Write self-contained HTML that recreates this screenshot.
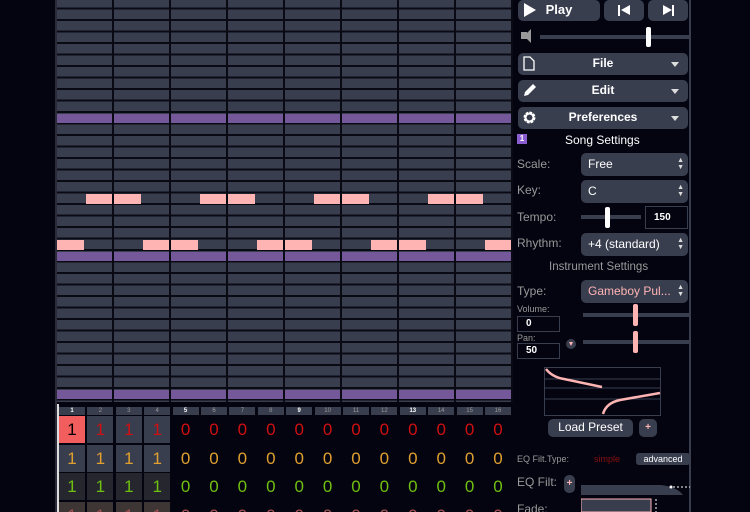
<!DOCTYPE html>
<html style="width:750px;height:512px;overflow:hidden"><head><meta charset="utf-8"><style>
*{margin:0;padding:0;box-sizing:border-box}
body{width:750px;height:512px;overflow:hidden;background:#040410;font-family:"Liberation Sans","DejaVu Sans",sans-serif;position:relative;color:#fff}
.a{position:absolute}
.btn{position:absolute;background:#393e4f;border-radius:5px;color:#fff;font-size:12px;font-weight:bold;text-align:center}
.lbl{position:absolute;color:#999;font-size:12px}
.sel{position:absolute;background:#393e4f;border-radius:5px;color:#fff;font-size:12px;padding-left:7px}
.arr{position:absolute;right:4px;font-size:7px;color:#ddd;line-height:7px}
.dd{position:absolute;right:9px;top:9px;width:0;height:0;border-left:4px solid transparent;border-right:4px solid transparent;border-top:5px solid #ddd}
.n{position:absolute;background:#ffb4b4;height:10px;width:27px}
.pn{position:absolute;top:407px;height:8px;width:26px;background:#393e4f;color:#999;font-size:6px;text-align:center;line-height:8px}
.pc{position:absolute;width:26px;height:27px;font-size:17px;text-align:center;line-height:27px}
.inp{position:absolute;background:#040410;border:1px solid #393e4f;color:#fff;font-size:10px;font-weight:bold;padding-left:8px}
</style></head><body>
<div class="a" style="left:55px;top:0;width:2px;height:512px;background:#2a2a3a"></div>
<div class="a" style="left:57px;top:-2px;width:456px;height:404px;background:repeating-linear-gradient(to bottom,#393e4f 0 9.5px,#0a0a14 9.5px 11.5px)"></div>
<div class="a" style="left:57px;top:113.5px;width:456px;height:9.5px;background:#74589a"></div>
<div class="a" style="left:57px;top:251.5px;width:456px;height:9.5px;background:#74589a"></div>
<div class="a" style="left:57px;top:389.5px;width:456px;height:9.5px;background:#74589a"></div>
<div class="n" style="left:86px;top:194px"></div><div class="n" style="left:114px;top:194px"></div>
<div class="n" style="left:200px;top:194px"></div><div class="n" style="left:228px;top:194px"></div>
<div class="n" style="left:314px;top:194px"></div><div class="n" style="left:342px;top:194px"></div>
<div class="n" style="left:428px;top:194px"></div><div class="n" style="left:456px;top:194px"></div>
<div class="n" style="left:57px;top:240px"></div><div class="n" style="left:143px;top:240px"></div>
<div class="n" style="left:171px;top:240px"></div><div class="n" style="left:257px;top:240px"></div>
<div class="n" style="left:285px;top:240px"></div><div class="n" style="left:371px;top:240px"></div>
<div class="n" style="left:399px;top:240px"></div><div class="n" style="left:485px;top:240px"></div>
<div class="a" style="left:57px;top:0;width:456px;height:402px;background:repeating-linear-gradient(to right,transparent 0 55px,#0a0a14 55px 57px)"></div>
<div class="a" style="left:57px;top:404px;width:2px;height:108px;background:#ddd"></div>
<div class="a" style="left:0;top:0;width:750px;height:512px;overflow:hidden"><div id="pat"></div></div>
<script>
var h='';var cols=[['#d01010','#f25d5d','#393e4f'],['#e0a030','#393e4f','#393e4f'],['#6fc010','#25262e','#25262e'],['#a05050','#3e3535','#3e3535']];
for(var i=0;i<16;i++){var x=59+i*28.4;
h+='<div class="pn" style="left:'+x+'px;'+((i%4==0)?'color:#fff;font-weight:bold':'')+'">'+(i+1)+'</div>';
for(var r=0;r<4;r++){var y=416+r*28.5;var c=cols[r];var on=i<4;
var bg=on?(r==0&&i==0?c[1]:c[2]):'transparent';var col=(r==0&&i==0)?'#000':c[0];
h+='<div class="pc" style="left:'+x+'px;top:'+y+'px;background:'+bg+';color:'+col+'">'+(on?'1':'0')+'</div>';}}
document.getElementById('pat').innerHTML=h;
</script>
<div class="a" style="left:689px;top:0;width:2px;height:512px;background:#393e4f"></div>
<div class="btn" style="left:518px;top:0;width:82px;height:21px;line-height:20px;font-size:13px"><span style="position:absolute;left:6px;top:3px;width:0;height:0;border-top:7px solid transparent;border-bottom:7px solid transparent;border-left:12px solid #fff"></span>Play</div>
<div class="btn" style="left:604px;top:0;width:40px;height:21px"><span class="a" style="left:14px;top:5px;width:2px;height:11px;background:#fff"></span><span class="a" style="left:17px;top:5px;border-top:5.5px solid transparent;border-bottom:5.5px solid transparent;border-right:9px solid #fff"></span></div>
<div class="btn" style="left:648px;top:0;width:40px;height:21px"><span class="a" style="left:15px;top:5px;border-top:5.5px solid transparent;border-bottom:5.5px solid transparent;border-left:9px solid #fff"></span><span class="a" style="left:24px;top:5px;width:2px;height:11px;background:#fff"></span></div>
<div class="a" style="left:521px;top:32px;width:6px;height:7px;background:#999"></div><div class="a" style="left:524px;top:29px;border-top:7px solid transparent;border-bottom:7px solid transparent;border-right:7px solid #999"></div>
<div class="a" style="left:540px;top:35px;width:150px;height:4px;background:#393e4f"></div>
<div class="a" style="left:646px;top:27px;width:5px;height:20px;background:#fff;border-radius:2px"></div>
<div class="btn" style="left:518px;top:53px;width:170px;height:22px;line-height:21px">File<span class="dd"></span></div>
<svg class="a" style="left:523px;top:56px" width="12" height="15"><path d="M1 1h6l4 4v9H1z" fill="none" stroke="#fff" stroke-width="1.3"/></svg>
<div class="btn" style="left:518px;top:80px;width:170px;height:22px;line-height:21px">Edit<span class="dd"></span></div>
<svg class="a" style="left:522px;top:83px" width="15" height="15"><path d="M2 13l1-4 8-8 3 3-8 8z" fill="#fff"/></svg>
<div class="btn" style="left:518px;top:107px;width:170px;height:22px;line-height:21px">Preferences<span class="dd"></span></div>
<svg class="a" style="left:522px;top:110px" width="15" height="15"><circle cx="7.5" cy="7.5" r="4.5" fill="none" stroke="#fff" stroke-width="3" stroke-dasharray="2.4 1.1"/><circle cx="7.5" cy="7.5" r="4" fill="none" stroke="#fff" stroke-width="2"/></svg>
<div class="a" style="left:517px;top:134px;width:10px;height:10px;background:#8a5cd0;color:#fff;font-size:8px;font-weight:bold;text-align:center;line-height:10px">1</div>
<div class="a" style="left:565px;top:133px;font-size:12px;color:#fff">Song Settings</div>
<div class="lbl" style="left:517px;top:157px">Scale:</div>
<div class="sel" style="left:581px;top:153px;width:107px;height:23px;line-height:22px">Free<span class="arr" style="top:4px">▲<br>▼</span></div>
<div class="lbl" style="left:517px;top:183px">Key:</div>
<div class="sel" style="left:581px;top:180px;width:107px;height:23px;line-height:22px">C<span class="arr" style="top:4px">▲<br>▼</span></div>
<div class="lbl" style="left:517px;top:210px">Tempo:</div>
<div class="a" style="left:581px;top:215px;width:60px;height:4px;background:#393e4f"></div>
<div class="a" style="left:605px;top:207px;width:5px;height:21px;background:#fff;border-radius:2px"></div>
<div class="inp" style="left:645px;top:206px;width:43px;height:23px;line-height:21px">150</div>
<div class="lbl" style="left:517px;top:236px">Rhythm:</div>
<div class="sel" style="left:581px;top:233px;width:107px;height:23px;line-height:22px">+4 (standard)<span class="arr" style="top:4px">▲<br>▼</span></div>
<div class="a" style="left:549px;top:261px;font-size:11.5px;color:#999">Instrument Settings</div>
<div class="lbl" style="left:517px;top:284px">Type:</div>
<div class="sel" style="left:581px;top:280px;width:107px;height:23px;line-height:23px;color:#ffb4b4">Gameboy Pul...<span class="arr" style="top:4px">▲<br>▼</span></div>
<div class="a" style="left:517px;top:304px;font-size:9px;color:#999">Volume:</div>
<div class="inp" style="left:517px;top:316px;width:43px;height:16px;line-height:14px">0</div>
<div class="a" style="left:583px;top:313px;width:107px;height:4px;background:#393e4f"></div>
<div class="a" style="left:633px;top:304px;width:5px;height:22px;background:#ffb4b4;border-radius:2px"></div>
<div class="a" style="left:517px;top:333px;font-size:9px;color:#999">Pan:</div>
<div class="inp" style="left:517px;top:343px;width:43px;height:16px;line-height:14px">50</div>
<div class="a" style="left:566px;top:339px;width:10px;height:10px;border-radius:50%;background:#393e4f"></div><div class="a" style="left:569px;top:342px;border-left:2.5px solid transparent;border-right:2.5px solid transparent;border-top:4px solid #ffb4b4"></div>
<div class="a" style="left:583px;top:340px;width:107px;height:4px;background:#393e4f"></div>
<div class="a" style="left:633px;top:331px;width:5px;height:22px;background:#ffb4b4;border-radius:2px"></div>
<svg class="a" style="left:544px;top:367px" width="117" height="50"><rect x="0.5" y="0.5" width="116" height="48" fill="none" stroke="#393e4f"/><path d="M0 12H116M0 21H116M0 32H116" stroke="#393e4f"/><path d="M2 2Q8 10 20 12L58 20" stroke="#ffb4b4" stroke-width="2.5" fill="none"/><path d="M59 47Q62 36 76 33L116 26" stroke="#ffb4b4" stroke-width="2.5" fill="none"/></svg>
<div class="btn" style="left:548px;top:419px;width:85px;height:18px;line-height:17px;font-size:12px;font-weight:normal">Load Preset</div>
<div class="btn" style="left:639px;top:419px;width:18px;height:18px;line-height:17px;color:#ffb4b4;font-size:10px">+</div>
<div class="a" style="left:517px;top:454px;font-size:9px;color:#999">EQ Filt.Type:</div>
<div class="a" style="left:594px;top:454px;font-size:9px;color:#8a1010">simple</div>
<div class="btn" style="left:636px;top:453px;width:54px;height:12px;line-height:12px;font-size:9px;font-weight:normal;border-radius:3px">advanced</div>
<div class="lbl" style="left:517px;top:475px">EQ Filt:</div>
<div class="btn" style="left:564px;top:475px;width:11px;height:18px;line-height:17px;color:#ffb4b4;font-size:10px">+</div>
<svg class="a" style="left:581px;top:483px" width="109" height="29"><path d="M0 2H80Q96 4 102 12H0z" fill="#393e4f"/><circle cx="90" cy="4" r="1.5" fill="#fff"/><path d="M92 4H109" stroke="#fff" stroke-dasharray="2 2"/><rect x="0" y="16" width="70" height="13" fill="#393e4f" stroke="#ffb4b4"/><path d="M75 16V29" stroke="#fff" stroke-dasharray="2 2"/></svg>
<div class="lbl" style="left:517px;top:502px">Fade:</div>
</body></html>
